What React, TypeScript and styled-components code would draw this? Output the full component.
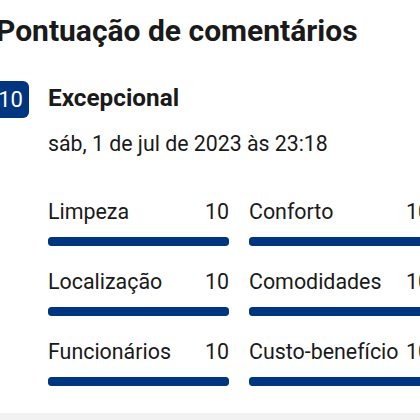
import React from 'react'
import styled, { createGlobalStyle } from 'styled-components'

const GlobalStyle = createGlobalStyle`
  html, body {
    margin: 0;
    padding: 0;
    background: #ffffff;
    font-family: Roboto, "Noto Sans", "Liberation Sans", sans-serif;
    color: #1a1a1a;
    overflow: hidden;
  }
`

const Page = styled.div`
  width: 420px;
  height: 420px;
  display: flex;
  flex-direction: column;
  overflow: hidden;
`

const Section = styled.section`
  flex: 1;
  margin-left: -8px;
  padding-top: 13px;
`

const Title = styled.h2`
  margin: 0 0 0 4px;
  font-size: 30px;
  line-height: 36px;
  font-weight: 700;
  white-space: nowrap;
`

const Review = styled.div`
  display: flex;
  gap: 19px;
  margin-top: 32px;
`

const Badge = styled.div`
  flex: none;
  width: 37px;
  height: 37px;
  border-radius: 6px;
  background: #003580;
  color: #ffffff;
  font-size: 22px;
  display: flex;
  align-items: center;
  justify-content: center;
`

const Body = styled.div`
  display: flex;
  flex-direction: column;
`

const Verdict = styled.div`
  font-size: 24.3px;
  font-weight: 700;
  line-height: 34px;
`

const Date = styled.div`
  font-size: 21.3px;
  line-height: 24px;
  margin-top: 17px;
`

const Grid = styled.div`
  display: grid;
  grid-template-columns: 181px 181px;
  column-gap: 20px;
  row-gap: 24px;
  margin-top: 44px;
`

const Item = styled.div`
  display: flex;
  flex-direction: column;
  gap: 13px;
`

const ItemHead = styled.div`
  display: flex;
  justify-content: space-between;
  font-size: 21.4px;
  line-height: 24px;
  white-space: nowrap;
`

const Track = styled.div`
  height: 9px;
  border-radius: 3px;
  background: #e6e6e6;
  overflow: hidden;
`

const Fill = styled.div`
  height: 100%;
  background: #003580;
  border-radius: 3px;
`

const Footer = styled.div`
  height: 7px;
  background: #f2f2f2;
`

const scores = [
  { name: 'Limpeza', value: 10 },
  { name: 'Conforto', value: 10 },
  { name: 'Localização', value: 10 },
  { name: 'Comodidades', value: 10 },
  { name: 'Funcionários', value: 10 },
  { name: 'Custo-benefício', value: 10 },
]

const App = () => {
  return (
    <Page>
      <GlobalStyle />
      <Section>
        <Title>Pontuação de comentários</Title>
        <Review>
          <Badge>10</Badge>
          <Body>
            <Verdict>Excepcional</Verdict>
            <Date>sáb, 1 de jul de 2023 às 23:18</Date>
            <Grid>
              {scores.map((s) => (
                <Item key={s.name}>
                  <ItemHead>
                    <span>{s.name}</span>
                    <span>{s.value}</span>
                  </ItemHead>
                  <Track>
                    <Fill style={{ width: `${s.value * 10}%` }} />
                  </Track>
                </Item>
              ))}
            </Grid>
          </Body>
        </Review>
      </Section>
      <Footer />
    </Page>
  )
}

export default App
